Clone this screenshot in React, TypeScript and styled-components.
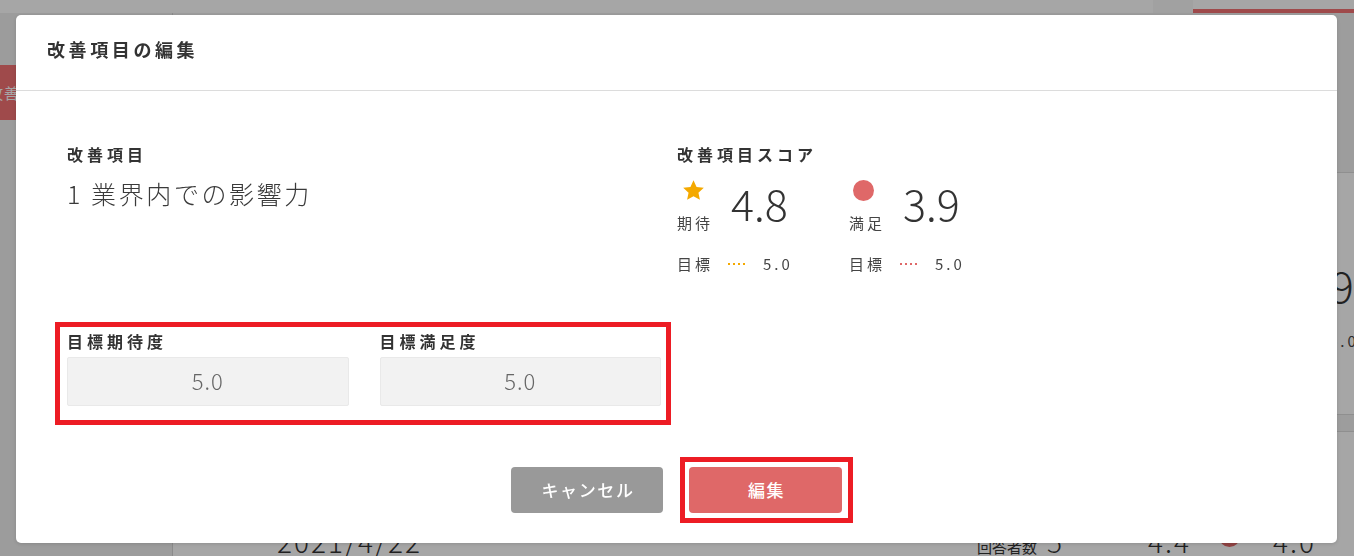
import React from "react";
import styled, { createGlobalStyle, css } from "styled-components";

const FONT = `"Noto Sans CJK JP", "Noto Sans", sans-serif`;
const RED = "#df6868";
const GOLD = "#f4a900";
const MARK = "#ed1c24";

const GlobalStyle = createGlobalStyle`
  html, body { margin: 0; padding: 0; height: 100%; overflow: hidden; }
  body { font-family: ${FONT}; color: #333; background: #f2f2f2; }
  *, *::before, *::after { box-sizing: border-box; }
`;

/* ---------- background page ---------- */
const Page = styled.div`
  width: 100vw;
  height: 100vh;
  display: grid;
  grid-template-rows: 13px 1fr;
  overflow: hidden;
  background: #f2f2f2;
`;

const TopBar = styled.header`
  display: flex;
  justify-content: flex-end;
  background: #fff;
`;

const TopTab = styled.div<{ $active?: boolean }>`
  width: ${(p) => (p.$active ? 161 : 40)}px;
  background: ${(p) => (p.$active ? "#fff" : "#f7f7f7")};
  border-bottom: 4px solid ${(p) => (p.$active ? "#f47274" : "transparent")};
`;

const Main = styled.div`
  display: grid;
  grid-template-columns: 173px 1fr;
  min-height: 0;
`;

const Sidebar = styled.nav`
  background: #f0f0f0;
  border-right: 1px solid #d6d6d6;
  padding-top: 52px;
`;

const SideItem = styled.div`
  height: 55px;
  display: flex;
  align-items: center;
  background: #f47274;
  color: #fff;
  font-size: 15px;
  letter-spacing: 1px;
  white-space: nowrap;
  overflow: hidden;
  span { margin-left: -12px; }
`;

const Content = styled.div`
  padding-top: 159px;
  display: flex;
  flex-direction: column;
  gap: 16px;
  overflow: hidden;
  min-width: 0;
`;

const Card = styled.section`
  flex: none;
  background: #fff;
  border-top: 1px solid #dcdcdc;
  border-bottom: 1px solid #dcdcdc;
`;

const ScoreCard = styled(Card)`
  height: 243px;
  padding: 86px 0 0 898px;
`;

const SummaryCard = styled(Card)`
  height: 200px;
  display: flex;
  align-items: baseline;
  padding: 89px 0 0 104px;
  white-space: nowrap;
`;

const DateText = styled.div`
  font-size: 28px;
  font-weight: 300;
  letter-spacing: 2px;
  line-height: 40px;
`;

const SumLabel = styled.span<{ $ml?: number }>`
  margin-left: ${(p) => p.$ml ?? 0}px;
  font-size: 15px;
`;

const SumNumber = styled.span<{ $ml?: number }>`
  margin-left: ${(p) => p.$ml ?? 0}px;
  font-size: 28px;
  font-weight: 300;
  letter-spacing: 2px;
`;

const SumIcon = styled.span<{ $ml: number; $mt: number }>`
  align-self: flex-start;
  margin-left: ${(p) => p.$ml}px;
  margin-top: ${(p) => p.$mt}px;
  display: inline-flex;
`;

const Overlay = styled.div`
  position: fixed;
  inset: 0;
  background: rgba(0, 0, 0, 0.35);
`;

/* ---------- modal ---------- */
const Modal = styled.div`
  position: fixed;
  top: 15px;
  left: 16px;
  width: 1321px;
  background: #fff;
  border-radius: 5px;
  box-shadow: 0 1px 4px rgba(0, 0, 0, 0.15);
`;

const ModalHeader = styled.div`
  height: 76px;
  padding: 22px 31px 0;
  border-bottom: 1px solid #dcdcdc;
`;

const ModalTitle = styled.h2`
  margin: 0;
  font-size: 18px;
  line-height: 24px;
  font-weight: 700;
  letter-spacing: 3.6px;
  color: #333;
`;

const ModalBody = styled.div`
  padding: 51px 51px 30px;
`;

const TopRow = styled.div`
  display: grid;
  grid-template-columns: 610px 1fr;
`;

const Column = styled.div`
  display: flex;
  flex-direction: column;
  align-items: flex-start;
`;

const SectionLabel = styled.div`
  font-size: 16px;
  line-height: 24px;
  font-weight: 700;
  letter-spacing: 4px;
  color: #333;
`;

const ItemName = styled.div`
  margin-top: 9px;
  font-size: 25px;
  line-height: 36px;
  font-weight: 300;
  letter-spacing: 2.6px;
  color: #3a3a3a;
`;

const Board = styled.div<{ $compact?: boolean }>`
  display: grid;
  grid-template-columns: 172px 172px;
  row-gap: ${(p) => (p.$compact ? 16 : 21)}px;
  margin-top: ${(p) => (p.$compact ? 0 : 11)}px;
`;

const ScoreItem = styled.div`
  display: flex;
  align-items: flex-start;
`;

const IconCol = styled.div`
  width: 36px;
  padding-top: 1px;
  display: flex;
  flex-direction: column;
  gap: 10px;
`;

const IconBox = styled.div`
  height: 25px;
  display: flex;
  align-items: center;
  padding-left: 4px;
`;

const Dot = styled.span<{ $size: number }>`
  display: block;
  width: ${(p) => p.$size}px;
  height: ${(p) => p.$size}px;
  border-radius: 50%;
  background: ${RED};
`;

const SmallText = styled.div`
  font-size: 15px;
  line-height: 20px;
  letter-spacing: 3px;
  color: #444;
  white-space: nowrap;
`;

const BigNumber = styled.div`
  margin-left: 18px;
  font-size: 43px;
  line-height: 50px;
  font-weight: 300;
  color: #333;
`;

const TargetItem = styled.div`
  display: flex;
  align-items: center;
`;

const Dots = styled.span<{ $color: string }>`
  display: block;
  margin-left: 15px;
  width: 18px;
  height: 2px;
  background-image: linear-gradient(to right, ${(p) => p.$color} 50%, transparent 50%);
  background-size: 5px 2px;
`;

const TargetValue = styled(SmallText)`
  margin-left: 17px;
`;

const Marked = css`
  position: relative;
  &::after {
    content: "";
    position: absolute;
    border: 5px solid ${MARK};
    pointer-events: none;
  }
`;

const FormRow = styled.div`
  ${Marked}
  margin-top: 55px;
  width: 594px;
  display: grid;
  grid-template-columns: 1fr 1fr;
  column-gap: 31px;
  &::after {
    top: -7px;
    bottom: -19px;
    left: -12px;
    right: -10px;
  }
`;

const Field = styled.div`
  display: flex;
  flex-direction: column;
`;

const ValueBox = styled.div`
  margin-top: 4px;
  height: 49px;
  padding-bottom: 4px;
  display: flex;
  align-items: center;
  justify-content: center;
  background: #f2f2f2;
  border: 1px solid #e9e9e9;
  border-radius: 2px;
  font-size: 22px;
  font-weight: 300;
  letter-spacing: 1px;
  color: #666;
`;

const ButtonRow = styled.div`
  margin-top: 61px;
  display: flex;
  justify-content: center;
  gap: 26px;
`;

const Button = styled.button<{ $primary?: boolean }>`
  width: ${(p) => (p.$primary ? 153 : 152)}px;
  height: 46px;
  border: none;
  border-radius: 4px;
  background: ${(p) => (p.$primary ? RED : "#999")};
  color: #fff;
  font-family: ${FONT};
  font-size: 17px;
  font-weight: 500;
  letter-spacing: 1.6px;
  padding: 0 0 2px 2px;
  cursor: pointer;
`;

const MarkedWrap = styled.span`
  ${Marked}
  display: inline-flex;
  &::after {
    top: -10px;
    bottom: -10px;
    left: -9px;
    right: -11px;
  }
`;

/* ---------- icons ---------- */
const Star = ({ size = 25 }: { size?: number }) => (
  <svg width={size} height={size} viewBox="0 0 24 24" aria-hidden="true">
    <path
      fill={GOLD}
      d="M12 2.2l2.95 6.35 6.95.8-5.15 4.72 1.4 6.87L12 17.5l-6.15 3.44 1.4-6.87L2.1 9.35l6.95-.8z"
    />
  </svg>
);

type Score = { kind: "star" | "dot"; label: string; value: string; target: string };

const SCORES: Score[] = [
  { kind: "star", label: "期待", value: "4.8", target: "5.0" },
  { kind: "dot", label: "満足", value: "3.9", target: "5.0" },
];

const ScoreBoard = ({ compact }: { compact?: boolean }) => (
  <Board $compact={compact}>
    {SCORES.map((s) => (
      <ScoreItem key={s.label}>
        <IconCol>
          <IconBox>{s.kind === "star" ? <Star /> : <Dot $size={21} />}</IconBox>
          <SmallText>{s.label}</SmallText>
        </IconCol>
        <BigNumber>{s.value}</BigNumber>
      </ScoreItem>
    ))}
    {SCORES.map((s) => (
      <TargetItem key={s.label + "t"}>
        <SmallText>目標</SmallText>
        <Dots $color={s.kind === "star" ? GOLD : RED} />
        <TargetValue>{s.target}</TargetValue>
      </TargetItem>
    ))}
  </Board>
);

export default function App() {
  return (
    <>
      <GlobalStyle />
      <Page>
        <TopBar>
          <TopTab />
          <TopTab $active />
        </TopBar>
        <Main>
          <Sidebar>
            <SideItem>
              <span>改善項目</span>
            </SideItem>
          </Sidebar>
          <Content>
            <ScoreCard>
              <ScoreBoard compact />
            </ScoreCard>
            <SummaryCard>
              <DateText>2021/4/22</DateText>
              <SumLabel $ml={555}>回答者数</SumLabel>
              <SumNumber $ml={10}>5</SumNumber>
              <SumIcon $ml={22} $mt={0}>
                <Star />
              </SumIcon>
              <SumNumber $ml={37}>4.4</SumNumber>
              <SumIcon $ml={28} $mt={5}>
                <Dot $size={21} />
              </SumIcon>
              <SumNumber $ml={33}>4.0</SumNumber>
            </SummaryCard>
          </Content>
        </Main>
      </Page>
      <Overlay />
      <Modal role="dialog" aria-modal="true">
        <ModalHeader>
          <ModalTitle>改善項目の編集</ModalTitle>
        </ModalHeader>
        <ModalBody>
          <TopRow>
            <Column>
              <SectionLabel>改善項目</SectionLabel>
              <ItemName>1 業界内での影響力</ItemName>
            </Column>
            <Column>
              <SectionLabel>改善項目スコア</SectionLabel>
              <ScoreBoard />
            </Column>
          </TopRow>
          <FormRow>
            <Field>
              <SectionLabel>目標期待度</SectionLabel>
              <ValueBox>5.0</ValueBox>
            </Field>
            <Field>
              <SectionLabel>目標満足度</SectionLabel>
              <ValueBox>5.0</ValueBox>
            </Field>
          </FormRow>
          <ButtonRow>
            <Button>キャンセル</Button>
            <MarkedWrap>
              <Button $primary>編集</Button>
            </MarkedWrap>
          </ButtonRow>
        </ModalBody>
      </Modal>
    </>
  );
}
